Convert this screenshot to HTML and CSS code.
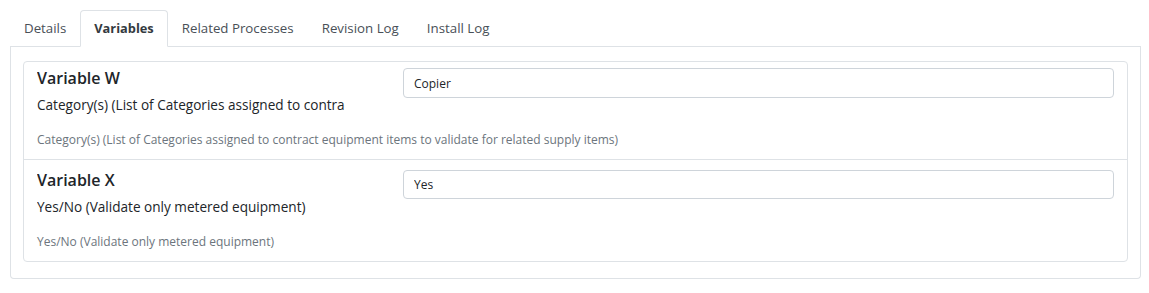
FILE: index.html
```html
<!DOCTYPE html>
<html lang="en">
<head>
  <meta charset="UTF-8">
  <title>Variables</title>
  <link rel="stylesheet" href="styles.css">
</head>
<body>
  <ul class="tabs">
    <li><a href="javascript:;">Details</a></li>
    <li class="active"><a href="javascript:;">Variables</a></li>
    <li><a href="javascript:;">Related Processes</a></li>
    <li><a href="javascript:;">Revision Log</a></li>
    <li><a href="javascript:;">Install Log</a></li>
  </ul>
  <div class="tab-content">
    <div class="var-list">
      <div class="var-item">
        <div class="var-row">
          <div class="var-label">
            <h4>Variable W</h4>
            <p>Category(s) (List of Categories assigned to contract equipment items to validate for related supply items)</p>
          </div>
          <input class="var-input" type="text" value="Copier">
        </div>
        <small>Category(s) (List of Categories assigned to contract equipment items to validate for related supply items)</small>
      </div>
      <div class="var-item">
        <div class="var-row">
          <div class="var-label">
            <h4>Variable X</h4>
            <p>Yes/No (Validate only metered equipment)</p>
          </div>
          <input class="var-input" type="text" value="Yes">
        </div>
        <small>Yes/No (Validate only metered equipment)</small>
      </div>
    </div>
  </div>
</body>
</html>
```

FILE: styles.css
```css
*{margin:0;padding:0;box-sizing:border-box;}
body{padding:10px 8px 10px 10px;font-family:"Open Sans","Noto Sans",sans-serif;color:#212529;background:#fff;}
ul,li{list-style:none;}
a{text-decoration:none;color:inherit;}
/* tabs */
.tabs{display:flex;border-bottom:1px solid #dee2e6;}
.tabs li{margin-bottom:-1px;}
.tabs a{display:block;height:37px;line-height:35px;padding:0 13px;font-size:13.3px;color:#495057;border:1px solid transparent;border-radius:4px 4px 0 0;}
.tabs .active a{color:#343a40;font-weight:700;font-size:12.8px;background:#fff;border-color:#dee2e6 #dee2e6 #fff;}
.tab-content{border:1px solid #dee2e6;border-top:0;border-radius:0 0 4px 4px;padding:14px 12px 16px 12px;}
/* variable list */
.var-list{border:1px solid #dee2e6;border-radius:4px;}
.var-item{padding:6px 13px 11px 13px;}
.var-item + .var-item{border-top:1px solid #dee2e6;padding-top:10px;}
/* label column clips long descriptions */
.var-row{display:grid;grid-template-columns:308px 1fr;column-gap:58px;}
.var-label{overflow:hidden;white-space:nowrap;}
.var-label h4{font-size:16px;font-weight:600;line-height:21px;color:#212529;}
.var-label p{font-size:13.6px;line-height:19px;margin-top:6px;color:#212529;}
.var-input{height:30px;border:1px solid #ced4da;border-radius:4px;padding:0 10px;font-family:inherit;font-size:12px;color:#212529;}
.var-item:nth-child(2) .var-input{height:29px;}
.var-item small{display:block;margin-top:18px;font-size:12px;line-height:16px;color:#6c757d;}
```
